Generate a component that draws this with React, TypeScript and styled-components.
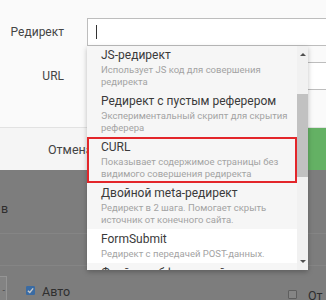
import styled, { createGlobalStyle } from 'styled-components';

const GlobalStyle = createGlobalStyle`
  html, body {
    margin: 0;
    padding: 0;
    background: #7d7d7d;
  }
  body {
    font-family: Roboto, "Noto Sans", "Liberation Sans", sans-serif;
  }
`;

type Option = { title: string; desc: string };

const options: Option[] = [
  { title: 'JS-редирект', desc: 'Использует JS код для совершения редиректа' },
  { title: 'Редирект с пустым реферером', desc: 'Экспериментальный скрипт для скрытия реферера' },
  { title: 'CURL', desc: 'Показывает содержимое страницы без видимого совершения редиректа' },
  { title: 'Двойной meta-редирект', desc: 'Редирект в 2 шага. Помогает скрыть источник от конечного сайта.' },
  { title: 'FormSubmit', desc: 'Редирект с передачей POST-данных.' },
  { title: 'Фрейм с обфускацией', desc: 'Открывает страницу во фрейме.' },
];

function App() {
  return (
    <Screen>
      <GlobalStyle />
      <Modal>
        <Form>
          <FieldRow>
            <Label>Редирект</Label>
            <Input>
              <Caret />
            </Input>
          </FieldRow>
          <FieldRow $spaced>
            <Label>URL</Label>
            <Input />
          </FieldRow>
        </Form>
        <Footer>
          <CancelButton>Отмена</CancelButton>
          <SaveButton>Сохранить</SaveButton>
        </Footer>
      </Modal>

      <Backdrop>
        <PageRow $height={64}>
          <PageText>в</PageText>
        </PageRow>
        <PageRow $height={10} />
        <BottomRow>
          <SelectStub>-</SelectStub>
          <Check $checked>
            <svg width='7' height='7' viewBox='0 0 8 8'>
              <path d='M1 4.2 L3.2 6.2 L7 1.6' fill='none' stroke='#c9c9c9' strokeWidth='1.6' />
            </svg>
          </Check>
          <CheckLabel>Авто</CheckLabel>
          <RightGroup>
            <Check />
            <CheckLabel>От</CheckLabel>
          </RightGroup>
        </BottomRow>
      </Backdrop>

      <Dropdown>
        <OptionList>
          {options.map((opt) => (
            <OptionItem
              key={opt.title}
              $marked={opt.title === 'CURL'}
              $hover={opt.title === 'FormSubmit'}
            >
              <OptionTitle>{opt.title}</OptionTitle>
              <OptionDesc>{opt.desc}</OptionDesc>
            </OptionItem>
          ))}
        </OptionList>
        <ScrollTrack>
          <ArrowButton>
            <ArrowUp />
          </ArrowButton>
          <ThumbArea>
            <Thumb style={{ marginTop: 31, height: 83 }} />
          </ThumbArea>
          <ArrowButton>
            <ArrowDown />
          </ArrowButton>
        </ScrollTrack>
      </Dropdown>
    </Screen>
  );
}

export default App;

const Screen = styled.div`
  position: relative;
  width: 326px;
  height: 300px;
  overflow: hidden;
  display: flex;
  flex-direction: column;
`;

const Modal = styled.div`
  background: #fafafa;
  display: flex;
  flex-direction: column;
`;

const Form = styled.div`
  padding: 18px 0 37px;
`;

const FieldRow = styled.div<{ $spaced?: boolean }>`
  display: grid;
  grid-template-columns: 87px 1fr;
  align-items: center;
  margin-top: ${(p) => (p.$spaced ? '16px' : '0')};
`;

const Label = styled.label`
  text-align: right;
  padding-right: 23px;
  font-size: 12px;
  color: #454545;
`;

const Input = styled.div`
  height: 28px;
  box-sizing: border-box;
  margin-right: -10px;
  border: 1px solid #bdbdbd;
  background: #fff;
  display: flex;
  align-items: center;
  padding-left: 8px;
`;

const Caret = styled.span`
  width: 1px;
  height: 14px;
  background: #333;
`;

const Footer = styled.div`
  display: grid;
  grid-template-columns: 308px 120px;
  height: 42px;
  border-top: 1px solid #e2e2e2;
  background: #f5f5f5;
`;

const CancelButton = styled.div`
  display: flex;
  align-items: center;
  padding-left: 48px;
  font-size: 12.5px;
  color: #444;
`;

const SaveButton = styled.div`
  display: flex;
  align-items: center;
  padding-left: 24px;
  background: #64b164;
  color: #fff;
  font-size: 12.5px;
`;

const Backdrop = styled.div`
  flex: 1;
  background: #7d7d7d;
  display: flex;
  flex-direction: column;
`;

const PageRow = styled.div<{ $height: number }>`
  height: ${(p) => p.$height}px;
  box-sizing: border-box;
  border-bottom: 1px solid #858585;
  padding-top: 31px;
`;

const PageText = styled.span`
  display: block;
  padding-left: 1px;
  font-size: 12.5px;
  line-height: 16px;
  color: #2e2e2e;
`;

const BottomRow = styled.div`
  margin-top: auto;
  height: 24px;
  display: grid;
  grid-template-columns: 7px 19px 9px 7px auto 1fr 9px 11px 18px;
  align-items: center;
  white-space: nowrap;
`;

const SelectStub = styled.div`
  align-self: stretch;
  box-sizing: border-box;
  border: 1px solid #959595;
  border-left: none;
  border-bottom: none;
  background: #838383;
  display: flex;
  align-items: center;
  justify-content: flex-end;
  padding-right: 1px;
  font-size: 9px;
  color: #444;
`;

const Check = styled.span<{ $checked?: boolean }>`
  grid-column: ${(p) => (p.$checked ? 3 : 7)};
  width: 9px;
  height: 9px;
  box-sizing: border-box;
  margin-top: ${(p) => (p.$checked ? '2px' : '10px')};
  display: flex;
  align-items: center;
  justify-content: center;
  border: 1px solid ${(p) => (p.$checked ? '#3a6ba3' : '#5e5e5e')};
  background: ${(p) => (p.$checked ? '#3a6ba3' : '#858585')};
  border-radius: 1px;
`;

const CheckLabel = styled.span`
  grid-column: 5;
  margin-top: 4px;
  font-size: 12.5px;
  color: #2f2f2f;
`;

const RightGroup = styled.div`
  display: contents;

  ${CheckLabel} {
    grid-column: 9;
    margin-top: 12px;
  }
`;

const Dropdown = styled.div`
  position: absolute;
  left: 87px;
  top: 46px;
  width: 221px;
  height: 224px;
  display: flex;
  background: #f6f6f6;
  box-shadow: 0 2px 5px rgba(0, 0, 0, 0.25);
  overflow: hidden;
`;

const OptionList = styled.div`
  width: 210px;
  flex: none;
  margin-top: -1px;
  display: flex;
  flex-direction: column;
`;

const OptionItem = styled.div<{ $marked?: boolean; $hover?: boolean }>`
  padding: 2px 8px 3px 14px;
  background: ${(p) => (p.$hover ? '#ffffff' : 'transparent')};
  outline: ${(p) => (p.$marked ? '2px solid #e3262a' : 'none')};
  outline-offset: -2px;
`;

const OptionTitle = styled.div`
  font-size: 12px;
  line-height: 17px;
  color: #3a3a3a;
  white-space: nowrap;
`;

const OptionDesc = styled.div`
  font-size: 9.5px;
  line-height: 12px;
  color: #a3a3a3;
  max-width: 188px;
`;

const ScrollTrack = styled.div`
  width: 11px;
  flex: none;
  background: #f1f1f1;
  display: flex;
  flex-direction: column;
`;

const ArrowButton = styled.div`
  height: 17px;
  display: flex;
  align-items: center;
  justify-content: center;
`;

const ArrowUp = styled.span`
  width: 0;
  height: 0;
  border-left: 3px solid transparent;
  border-right: 3px solid transparent;
  border-bottom: 3px solid #505050;
`;

const ArrowDown = styled.span`
  width: 0;
  height: 0;
  border-left: 3px solid transparent;
  border-right: 3px solid transparent;
  border-top: 3px solid #505050;
`;

const ThumbArea = styled.div`
  flex: 1;
  display: flex;
  flex-direction: column;
`;

const Thumb = styled.div`
  background: #c1c1c1;
`;
